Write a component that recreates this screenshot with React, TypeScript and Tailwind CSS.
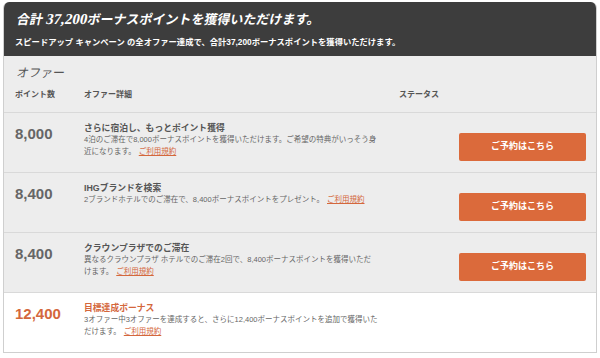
import React from 'react'

const jp = { fontFamily: '"Liberation Sans", "Noto Sans CJK JP", sans-serif' }

type Offer = {
  points: string
  title: string
  lines: string[]
  bonus?: boolean
}

const offers: Offer[] = [
  {
    points: '8,000',
    title: 'さらに宿泊し、もっとポイント獲得',
    lines: ['4泊のご滞在で8,000ボーナスポイントを獲得いただけます。ご希望の特典がいっそう身', '近になります。'],
  },
  {
    points: '8,400',
    title: 'IHGブランドを検索',
    lines: ['2ブランドホテルでのご滞在で、8,400ボーナスポイントをプレゼント。'],
  },
  {
    points: '8,400',
    title: 'クラウンプラザでのご滞在',
    lines: ['異なるクラウンプラザ ホテルでのご滞在2回で、8,400ボーナスポイントを獲得いただ', 'けます。'],
  },
  {
    points: '12,400',
    title: '目標達成ボーナス',
    lines: ['3オファー中3オファーを達成すると、さらに12,400ボーナスポイントを追加で獲得いた', 'だけます。'],
    bonus: true,
  },
]

const OfferRow = ({ offer }: { offer: Offer }) => (
  <div
    className={`grid h-[60px] grid-cols-[69px_300px_1fr] border-t border-[#d9d9d9] pl-[11px] ${
      offer.bonus ? 'bg-white' : 'bg-[#ededed]'
    }`}
  >
    <div
      className={`pt-[11px] text-[15px] font-bold leading-[20px] ${
        offer.bonus ? 'text-[#d4673c]' : 'text-[#666]'
      }`}
      style={{ fontFamily: '"Liberation Sans", Arial, sans-serif' }}
    >
      {offer.points}
    </div>
    <div className="pt-[9px]">
      <div
        className={`text-[8.8px] font-bold leading-[12px] ${
          offer.bonus ? 'text-[#d4673c]' : 'text-[#555]'
        }`}
      >
        {offer.title}
      </div>
      <div className="text-[7.5px] leading-[12px] text-[#666]">
        {offer.lines.map((l, i) => (
          <React.Fragment key={i}>
            {i > 0 && <br />}
            {l}
          </React.Fragment>
        ))}
        <span className="ml-[3px] text-[#d4673c] underline">ご利用規約</span>
      </div>
    </div>
    <div className="flex justify-end pr-[10px] pt-[20px]">
      {!offer.bonus && (
        <button className="h-[28px] w-[127px] rounded-[2px] bg-[#db6a3b] text-[9px] font-bold text-white">
          ご予約はこちら
        </button>
      )}
    </div>
  </div>
)

export default function App() {
  return (
    <div className="h-[358px] w-[600px] bg-white px-[3px] pt-[2px]" style={jp}>
      <div className="overflow-hidden rounded-t-[6px] border-x border-b border-[#cfcfcf]">
        <div className="h-[54px] bg-[#3d3d3d] px-[11px] pt-[8px] text-white">
          <h1
            className="w-fit origin-bottom-left -skew-x-12 text-[13px] font-bold leading-[18px]"
            style={{ fontFamily: '"Liberation Serif", "Noto Sans CJK JP", serif' }}
          >
            合計 <span className="text-[15px]">37,200</span>ボーナスポイントを獲得いただけます。
          </h1>
          <p className="mt-[7px] text-[8.3px] font-bold leading-[12px]">
            スピードアップ キャンペーン の全オファー達成で、合計37,200ボーナスポイントを獲得いただけます。
          </p>
        </div>
        <div className="h-[56px] bg-[#ededed] pl-[11px] pt-[8px]">
          <div className="w-fit origin-bottom-left -skew-x-12 text-[12px] leading-[18px] text-[#555]">
            オファー
          </div>
          <div className="mt-[7px] grid grid-cols-[69px_315px_1fr] text-[8px] font-bold leading-[12px] text-[#555]">
            <div>ポイント数</div>
            <div>オファー詳細</div>
            <div>ステータス</div>
          </div>
        </div>
        {offers.map((o, i) => (
          <OfferRow key={i} offer={o} />
        ))}
      </div>
    </div>
  )
}
